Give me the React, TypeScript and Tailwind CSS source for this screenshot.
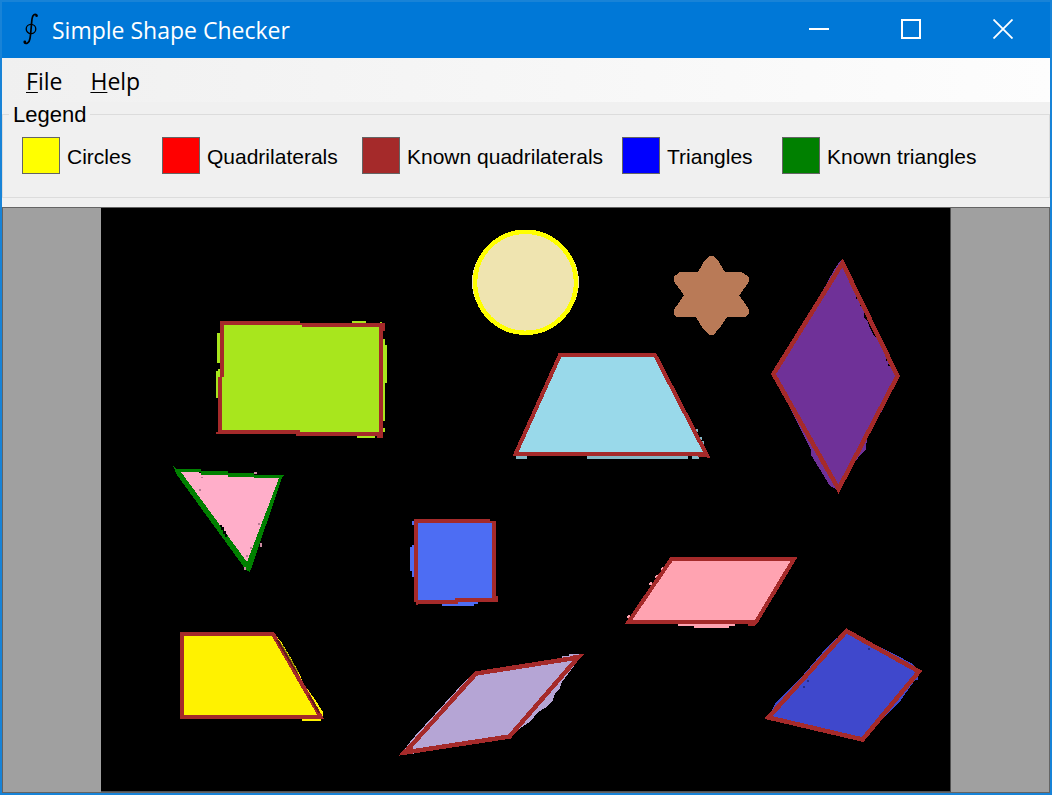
import type { ReactNode } from "react";

const legendItems = [
  { label: "Circles", swatch: "bg-[#ffff00]" },
  { label: "Quadrilaterals", swatch: "bg-[#ff0000]" },
  { label: "Known quadrilaterals", swatch: "bg-[#a52a2a]" },
  { label: "Triangles", swatch: "bg-[#0000ff]" },
  { label: "Known triangles", swatch: "bg-[#008000]" },
];

function AppIcon() {
  return (
    <svg viewBox="0 0 20 34" className="h-[34px] w-5" fill="none" stroke="#000" aria-hidden="true">
      <path d="M16 2.500C14 0.500 11.600 1.500 11 6C10.300 11.500 10 20 9 25.500C8.300 30 5 31.500 3.300 29.500" strokeWidth="1.700" />
      <circle cx="15.600" cy="2.800" r="1.300" fill="#000" stroke="none" />
      <circle cx="3.800" cy="29" r="1.400" fill="#000" stroke="none" />
      <ellipse cx="10" cy="16" rx="4.800" ry="4.600" strokeWidth="1.300" />
    </svg>
  );
}

function WindowButton({ label, children }: { label: string; children: ReactNode }) {
  return (
    <button type="button" aria-label={label} className="flex w-[92px] items-center justify-center">
      <svg viewBox="0 0 20 20" className="size-5" fill="none" stroke="#fff" strokeWidth="2">
        {children}
      </svg>
    </button>
  );
}

function TitleBar() {
  return (
    <header className="flex h-14 shrink-0 justify-between bg-[#0078d7]">
      <div className="flex items-center gap-[11px] pl-[19px]">
        <AppIcon />
        <h1 className="text-[23px] leading-8 text-white">Simple Shape Checker</h1>
      </div>
      <div className="mr-px flex pb-0.5">
        <WindowButton label="Minimize">
          <path d="M0 10H20" />
        </WindowButton>
        <WindowButton label="Maximize">
          <rect x="1" y="1" width="18" height="18" />
        </WindowButton>
        <WindowButton label="Close">
          <path d="M0.500 0.500L19.500 19.500M19.500 0.500L0.500 19.500" strokeWidth="1.800" />
        </WindowButton>
      </div>
    </header>
  );
}

function ShapeCanvas() {
  return (
    <svg
      viewBox="101 208 850 584"
      className="h-full w-full"
      shapeRendering="crispEdges"
      role="img"
      aria-label="Detected shapes"
    >
      <rect x="101" y="208" width="849" height="583" fill="#000" />
      <path d="M101 791H951V792H101ZM950 208H951V792H950Z" fill="#505050" />

      {/* Circle */}
      <ellipse cx="525.500" cy="282" rx="53.500" ry="50" fill="#efe4b0" />
      <ellipse cx="525.500" cy="282.300" rx="50.500" ry="50.500" fill="#efe4b0" stroke="#ff0" strokeWidth="4.500" />

      {/* Star */}
      <path
        fill="#b97a57"
        d="M709 256H714L719 262L725 272.300H742L748.700 277V282L739.300 295.300L748.700 309V314L746 317H727L721 326L714 334.500H708.700L702 327L696 317H677L673.700 314V310L684 295.300L673.700 281V277L679 272.300H698L703 263Z"
      />

      {/* Rectangle */}
      <g fill="#a8e61d">
        <path d="M221 323H382V434H221Z" />
        <path d="M352 320.500H366V323H352ZM217 333H220V363H217ZM216 371H218V369H220V398H216ZM383 339H385V345H387V383H385V421H383ZM357 435.500H375V438H357ZM382 428H385V432H382ZM380 322H382V324H380Z" />
      </g>
      <path
        fill="#a52a2a"
        d="M220 321H300V323H385V331H383V437.500H377V436H296V434H216V432H218V377H220ZM223.500 325V377H221.500V430H300V432H379V327H302V325Z"
        fillRule="evenodd"
      />

      {/* Cyan trapezoid */}
      <path d="M560 355H655L708 455H516Z" fill="#99d9ea" />
      <path d="M516 455H527V458.500H516ZM587 455H688V458.500H587ZM692 455H699V458.500H692ZM695 429H698V432H695ZM699 437H702V440H699ZM702 441H704V444H702Z" fill="#83b7c6" />
      <path d="M560 355H655L707 455.500L700 454H515.500Z" fill="none" stroke="#a52a2a" strokeWidth="4" />
      <path d="M701 452L710 457H698Z" fill="#a52a2a" />

      {/* Purple diamond */}
      <path
        fill="#6f3198"
        d="M840 261L834 270L822 292L773 374L805 438L811 450V455L824 476L830 486L836 489L853 465L860 455L866 450L867 436L878 418L884 407L898 376L880 345L877 339L873 334L870 328L867 320L864 318V308L844 262Z"
      />
      <path d="M856 297H858V299H856ZM860 304H862V306H860ZM886 359H888V361H886ZM888 364H890V366H888Z" fill="#000" />
      <path d="M842.500 263L897.500 376L838.500 489L773.500 374Z" fill="none" stroke="#a52a2a" strokeWidth="4.500" />

      {/* Green-outlined triangle */}
      <path d="M176 471L281 478L248 570Z" fill="#ffaec9" />
      <path
        fill="#008000"
        d="M173 466L177 469H201V471H228V473H254V475H284L282 478L250 572L246 570L177 475ZM181 472L247 562L279 478H254V476.500H228V475H201V472.500Z"
        fillRule="evenodd"
      />
      <path d="M199 489H201V491H199ZM201 477H203V478H201ZM258 523H260V525H258ZM250 547H252V549H250ZM246 555H248V557H246Z" fill="#b77891" />
      <path d="M220 525H222V527H224V531H226V534H227V537H225V534H223V530H221V527H220Z" fill="#000" />
      <path d="M260 543H262V547H260ZM244 567H246V570H244ZM254 472H257V474H254Z" fill="#c98aa0" />

      {/* Blue square */}
      <path d="M415 521H494V600H415ZM412 521H415V525H412ZM412 545H415V577H412V571H409.500V547H412ZM442 602H478V603.500H474V606H442Z" fill="#4d6df3" />
      <path
        fill="#a52a2a"
        d="M413.500 519H490V521H496V596H498V601.500H458V603.500H418V605H416V602H413.500ZM417.500 523V599.500H455V597.500H492V523Z"
        fillRule="evenodd"
      />

      {/* Pink parallelogram */}
      <path d="M671 559H795L757 622H627ZM678 623H735V626H729V628H694V626H678ZM662 567H664V570H661ZM656 575H658V578H655ZM650 582H652V585H649ZM628 615H630V618H627Z" fill="#ffa3b1" />
      <path d="M671.500 559H794L756 622H628.500Z" fill="none" stroke="#a52a2a" strokeWidth="4" />
      <path d="M748 620H759L755 626H748Z" fill="#a52a2a" />

      {/* Yellow trapezoid */}
      <path d="M181 634H275L282 643L291 658L299 673L304 684L314 698L323 712V717H181ZM302 717H321V720.500H302Z" fill="#fff200" />
      <path d="M180 632H183V634H180Z" fill="#fff200" />
      <path d="M181.500 634H273L320.500 716.500H181.500Z" fill="none" stroke="#a52a2a" strokeWidth="4" />
      <path d="M276 640H279L284 647L293 662L298 671V675L291 665L284 653ZM308 695H310L318 708L320 713H318Z" fill="#000" fillOpacity="0.400" />

      {/* Lavender parallelogram */}
      <path d="M476 673L562 658V656H569V654H580V658L562 682L560 688L555 693L553 700L545 708L538 712L531 721L519 729L510 737L411 754H405L404 750L410 742L415 736L466 680Z" fill="#b5a5d5" />
      <path d="M476 673.500L578 657.500L509.500 736.500L405 752.500Z" fill="none" stroke="#a52a2a" strokeWidth="4.500" />
      <path d="M573 655L585 654L576 661ZM399 754L410 745L416 753Z" fill="#a52a2a" />

      {/* Indigo quadrilateral */}
      <path d="M846 630L896 655L911 663L919 671L918 680H915L903 697L899 703L892 709L863 740L768 718L775 704L804 674L828 646Z" fill="#3f48cc" />
      <path d="M846.500 631L919 671.500L862.500 739.500L768.500 717.500Z" fill="none" stroke="#a52a2a" strokeWidth="4.500" />
      <path d="M807 680H809V682H807ZM803 686H805V688H803ZM868 648H870V650H868Z" fill="#272e88" />
    </svg>
  );
}

export default function App() {
  return (
    <div className="flex h-screen flex-col border-2 border-[#1883d7] bg-[#f0f0f0] font-['Open_Sans','Noto_Sans',sans-serif] text-black">
      <TitleBar />
      <nav className="flex h-11 shrink-0 items-center gap-1 bg-linear-to-r from-[#f0f0f0] to-[#fdfdfd] pl-3 pt-0.5 text-[23px] leading-8">
        <button type="button" className="px-3">
          <span className="underline decoration-1 underline-offset-2">F</span>ile
        </button>
        <button type="button" className="px-3">
          <span className="underline decoration-1 underline-offset-2">H</span>elp
        </button>
      </nav>
      <main className="flex min-h-0 flex-1 flex-col">
        <fieldset className="mb-[9px] shrink-0 border border-[#dcdcdc] pb-[23px] font-['Liberation_Sans',sans-serif] text-[21px] leading-[25px]">
          <legend className="ml-1.5 px-1 text-[22px] leading-[25px]">Legend</legend>
          <ul className="grid grid-cols-[140px_200px_260px_160px_auto] pl-[19px] pt-2.5">
            {legendItems.map((item) => (
              <li key={item.label} className="flex items-center gap-[7px] whitespace-nowrap">
                <span className={`h-[37px] w-[38px] shrink-0 border border-[#646464] ${item.swatch}`} />
                <span className="pt-0.5">{item.label}</span>
              </li>
            ))}
          </ul>
        </fieldset>
        <section className="min-h-0 flex-1 border border-[#646464] bg-[#a0a0a0]">
          <ShapeCanvas />
        </section>
      </main>
    </div>
  );
}
